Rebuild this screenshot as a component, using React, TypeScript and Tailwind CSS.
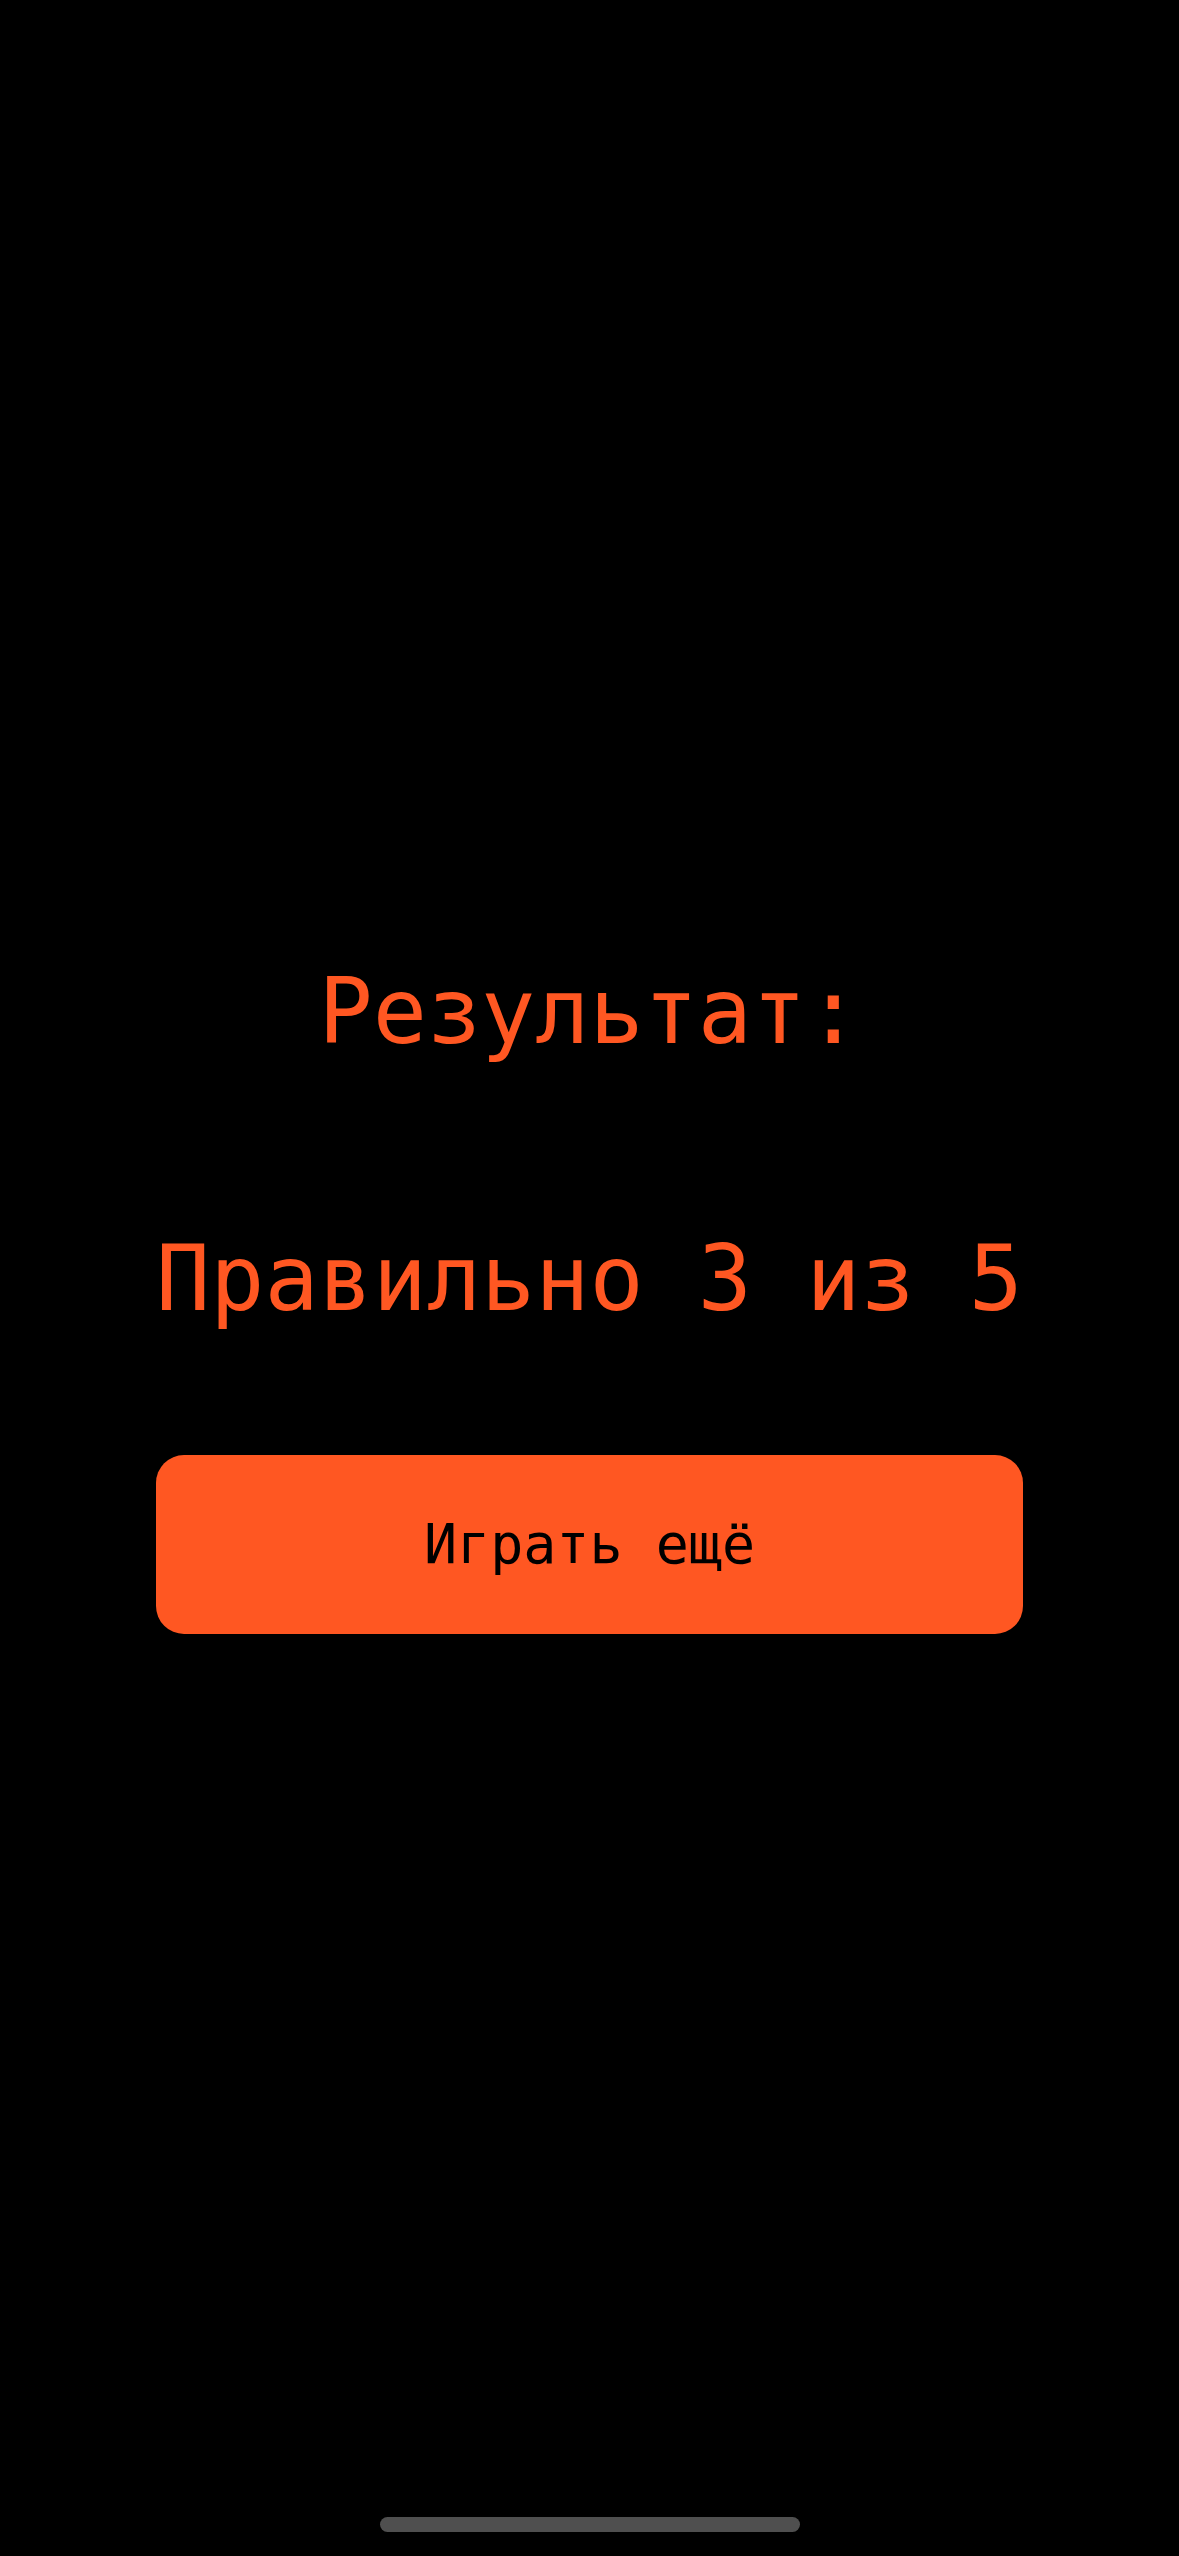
export default function App() {
  const mono = "font-['DejaVu_Sans_Mono',monospace]";

  return (
    <div className={`min-h-[2556px] bg-black flex flex-col items-center ${mono}`}>
      {/* result block */}
      <div className="w-full flex flex-col items-center px-[156px] pt-[967px]">
        <div className="h-[90px] text-[90px] leading-[90px] text-[#ff5722] whitespace-nowrap">
          Результат:
        </div>
        <div className="mt-[177px] h-[90px] text-[90px] leading-[90px] text-[#ff5722] whitespace-nowrap">
          Правильно 3 из 5
        </div>
        <button className="mt-[131px] w-full h-[179px] rounded-[28px] bg-[#ff5722] flex items-center justify-center">
          <span className="text-[55px] leading-[55px] text-black">Играть ещё</span>
        </button>
      </div>

      {/* home indicator */}
      <div className="mt-auto mb-[24px] w-[420px] h-[15px] rounded-full bg-[#4f4f4f]" />
    </div>
  );
}
